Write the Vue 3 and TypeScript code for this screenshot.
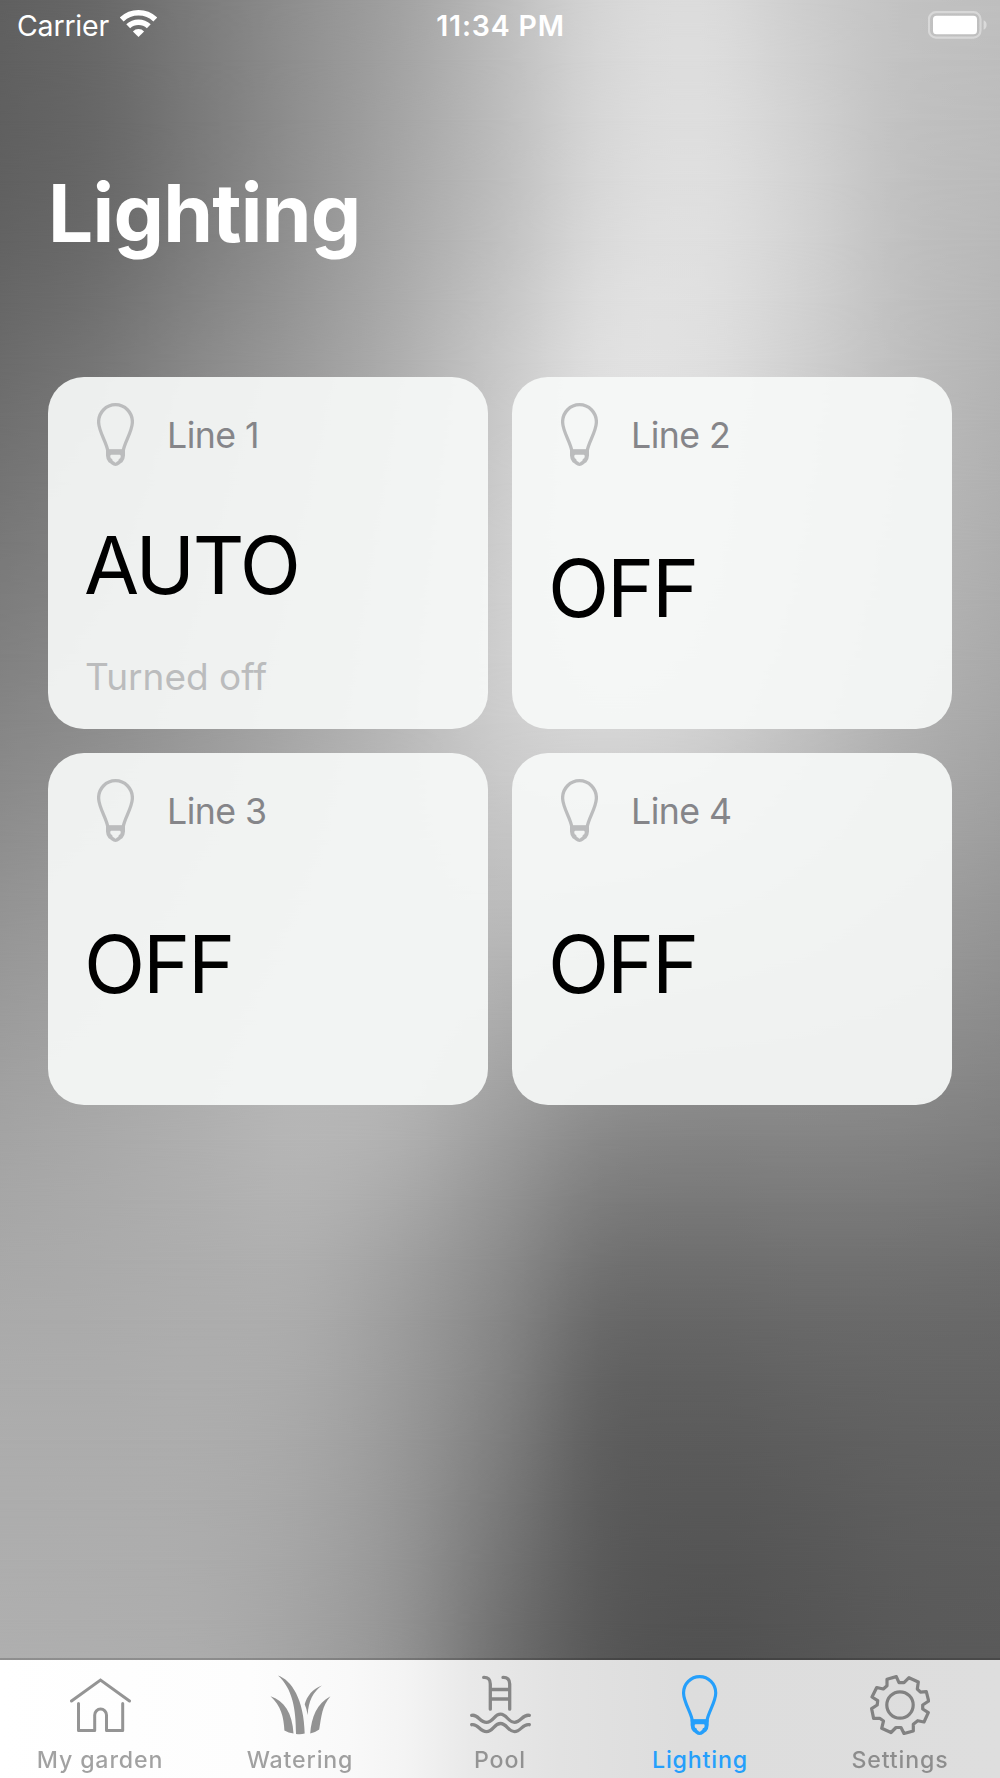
<script setup lang="ts">
interface Line {
  name: string
  mode: string
  note?: string
}

type TabIcon = 'home' | 'grass' | 'pool' | 'bulb' | 'gear'

interface Tab {
  label: string
  icon: TabIcon
  active?: boolean
}

interface MeshRow {
  y: number
  greys: number[]
}

const lines: Line[] = [
  { name: 'Line 1', mode: 'AUTO', note: 'Turned off' },
  { name: 'Line 2', mode: 'OFF' },
  { name: 'Line 3', mode: 'OFF' },
  { name: 'Line 4', mode: 'OFF' },
]

const tabs: Tab[] = [
  { label: 'My garden', icon: 'home' },
  { label: 'Watering', icon: 'grass' },
  { label: 'Pool', icon: 'pool' },
  { label: 'Lighting', icon: 'bulb', active: true },
  { label: 'Settings', icon: 'gear' },
]

// Backdrop mesh: grey levels across the width at a series of heights.
const columns = [0, 100, 200, 300, 400, 500, 600, 700, 800, 900, 1000]
const mesh: MeshRow[] = [
  { y: 0, greys: [96, 105, 124, 144, 162, 188, 213, 220, 206, 195, 191] },
  { y: 200, greys: [97, 105, 124, 145, 167, 190, 216, 223, 211, 193, 186] },
  { y: 370, greys: [108, 119, 138, 155, 175, 200, 223, 223, 208, 191, 180] },
  { y: 740, greys: [135, 143, 155, 169, 185, 204, 212, 207, 192, 176, 165] },
  { y: 1110, greys: [162, 168, 175, 182, 178, 160, 142, 137, 137, 135, 130] },
  { y: 1280, greys: [169, 171, 173, 173, 159, 138, 112, 108, 110, 110, 108] },
  { y: 1390, greys: [172, 172, 173, 169, 154, 130, 99, 95, 98, 100, 100] },
  { y: 1500, greys: [173, 173, 172, 166, 150, 122, 93, 88, 90, 94, 95] },
  { y: 1660, greys: [175, 174, 172, 163, 146, 112, 88, 81, 84, 88, 89] },
]

// Cubic Hermite interpolation through (xs, vs) with finite-difference slopes.
function smooth(xs: number[], vs: number[], x: number): number {
  const last = xs.length - 1
  if (x >= xs[last]) return vs[last]
  let i = 0
  while (x > xs[i + 1]) i++
  const slope = (k: number): number => {
    const a = Math.max(k - 1, 0)
    const b = Math.min(k + 1, last)
    return (vs[b] - vs[a]) / (xs[b] - xs[a])
  }
  const h = xs[i + 1] - xs[i]
  const t = (x - xs[i]) / h
  const t2 = t * t
  const t3 = t2 * t
  return (2 * t3 - 3 * t2 + 1) * vs[i] + (t3 - 2 * t2 + t) * h * slope(i)
    + (3 * t2 - 2 * t3) * vs[i + 1] + (t3 - t2) * h * slope(i + 1)
}

const rowStep = 60
const colStep = 25
const heights = mesh.map((row) => row.y)

const layers = Array.from({ length: 29 }, (_, i) => {
  const y = i * rowStep
  const greys = columns.map((_c, k) => smooth(heights, mesh.map((row) => row.greys[k]), y))
  const colours = Array.from({ length: 1000 / colStep + 1 }, (_s, n) => {
    const g = smooth(columns, greys, n * colStep).toFixed(1)
    return `rgb(${g} ${g} ${g}) ${n * colStep}px`
  }).join(', ')
  return {
    backgroundImage: `linear-gradient(90deg, ${colours})`,
    maskImage: i === 0 ? 'none' : `linear-gradient(180deg, transparent ${y - rowStep}px, #000 ${y}px)`,
  }
})
</script>

<template>
  <div class="screen">
    <div class="backdrop">
      <div v-for="(layer, i) in layers" :key="i" class="layer" :style="layer"></div>
    </div>

    <header class="status">
      <div class="status-side">
        <span class="carrier">Carrier</span>
        <svg class="wifi" width="37" height="27" viewBox="0 0 37 27" fill="none" stroke="#fff" stroke-width="5.6">
          <path d="M1.7 9.6A24.2 24.2 0 0 1 35.3 9.6" />
          <path d="M8.2 16.3A15 15 0 0 1 28.8 16.3" />
          <path d="M18.5 27 12.9 21.4A8 8 0 0 1 24.1 21.4Z" fill="#fff" stroke="none" />
        </svg>
      </div>
      <span class="time">11:34 PM</span>
      <div class="status-side end">
        <svg class="battery" width="59" height="28" viewBox="0 0 59 28">
          <rect x="1" y="1.2" width="51.5" height="25.4" rx="7" fill="none" stroke="#fff" stroke-opacity=".38" stroke-width="2.2" />
          <rect x="5" y="4.7" width="44" height="18.6" rx="3.6" fill="#fff" />
          <path d="M55.6 9.3Q58.6 10.6 58.6 14T55.6 18.7Z" fill="#fff" fill-opacity=".42" />
        </svg>
      </div>
    </header>

    <main class="content">
      <h1 class="title">Lighting</h1>
      <section class="grid">
        <article v-for="line in lines" :key="line.name" class="card">
          <div class="card-head">
            <svg class="bulb" width="37" height="63" viewBox="0 0 37 63">
              <path d="M10.8 48C9.8 39.5 1.6 28.6 1.6 18.9A16.9 17.2 0 0 1 35.4 18.9C35.4 28.6 27.2 39.5 26.2 48Z" fill="none" stroke="currentColor" stroke-width="3.3" />
              <path fill-rule="evenodd" d="M9 46.7H28V52.5Q27.8 57 25.4 59.2Q23.5 60.3 22.6 61.3Q20.5 62.9 18.5 62.9T14.4 61.3Q13.5 60.3 11.6 59.2Q9.2 57 9 52.5ZM14.2 51.7Q12.9 52 13.3 53.7Q13.4 55.6 15.1 56Q15.6 58.5 17 58.5Q18.5 60.8 20 58.5Q21.4 58.5 21.9 56Q23.6 55.6 23.7 53.7Q24.1 52 22.8 51.7Z" fill="currentColor" />
            </svg>
            <span class="name">{{ line.name }}</span>
          </div>
          <div class="mode">{{ line.mode }}</div>
          <div v-if="line.note" class="note">{{ line.note }}</div>
        </article>
      </section>
    </main>

    <nav class="tabs">
      <div v-for="tab in tabs" :key="tab.label" class="tab" :class="{ active: tab.active }">
        <svg v-if="tab.icon === 'home'" class="icon" width="61" height="60" viewBox="0 0 61 60" fill="none" stroke="currentColor" stroke-width="3" stroke-linecap="round" stroke-linejoin="round">
          <path d="M1.5 26 30.5 5 59.5 26" stroke-linejoin="miter" />
          <path d="M8.5 28.5V55.5H24.7V40A5.9 5.9 0 0 1 36.5 40V55.5H52.7V28.5" />
        </svg>
        <svg v-else-if="tab.icon === 'grass'" class="icon" width="61" height="60" viewBox="0 0 61 60" fill="currentColor">
          <path d="M8 .4C21.5 5 34 24 34.7 58.6Q30.5 59.8 26 58.9C26 34 22.5 13.5 8 .4Z" />
          <path d="M.5 21.2C14 25.5 22.5 38 23.5 58.4Q18.5 58 14.4 55.6C13.8 42 11 31 .5 21.2Z" />
          <path d="M51.9 10.5C43 17 38.4 26 37.7 40Q36.7 34 34.7 29.3C37 21 42.5 14 51.9 10.5Z" />
          <path d="M60.5 21.2C52 31 51.5 41 49.2 54.5Q45.5 57.4 40.2 58.5C41.5 42 47 28 60.5 21.2Z" />
        </svg>
        <svg v-else-if="tab.icon === 'pool'" class="icon" width="61" height="60" viewBox="0 0 61 60" fill="none" stroke="currentColor" stroke-width="3.3" stroke-linecap="round">
          <path d="M13.7 2.4Q20.3 2.2 20.3 9V34.2M33 2.4Q39.7 2.2 39.7 9V34.2M20.3 14.5H39.7M20.3 24H39.7" />
          <path d="M1.7 40.4C8 38.8 9.5 47.3 16.5 47.3S24 39.2 30.5 39.2 38 47.3 44.5 47.3 53 38.8 59.3 40.4" />
          <path d="M1.7 49.7C8 48.1 9.5 56.6 16.5 56.6S24 48.5 30.5 48.5 38 56.6 44.5 56.6 53 48.1 59.3 49.7" />
        </svg>
        <svg v-else-if="tab.icon === 'bulb'" class="icon" width="35.3" height="60" viewBox="0 0 37 63">
          <path d="M10.8 48C9.8 39.5 1.6 28.6 1.6 18.9A16.9 17.2 0 0 1 35.4 18.9C35.4 28.6 27.2 39.5 26.2 48Z" fill="none" stroke="currentColor" stroke-width="3.3" />
          <path fill-rule="evenodd" d="M9 46.7H28V52.5Q27.8 57 25.4 59.2Q23.5 60.3 22.6 61.3Q20.5 62.9 18.5 62.9T14.4 61.3Q13.5 60.3 11.6 59.2Q9.2 57 9 52.5ZM14.2 51.7Q12.9 52 13.3 53.7Q13.4 55.6 15.1 56Q15.6 58.5 17 58.5Q18.5 60.8 20 58.5Q21.4 58.5 21.9 56Q23.6 55.6 23.7 53.7Q24.1 52 22.8 51.7Z" fill="currentColor" />
        </svg>
        <svg v-else class="icon" width="60" height="60" viewBox="0 0 60 60" fill="none" stroke="currentColor" stroke-width="3.2" stroke-linejoin="round">
          <path d="M17 4.3 26.3 1.6 29 7.7H34L39 2.7 48.3 7 47.3 14 50.5 17.2 56.3 16.7 58.7 26 52.7 30V34L58.3 37.7 54 47 47.7 45.7 43.3 49.2V56L34 58.5 31 52.5H26L21 57.5 11.7 53.3 13.5 46 9.7 43.3H3.6L1.6 33.7 7.2 30 7.7 25.7 2 22 6.7 12.5 13.3 14 17 10.7Z" />
          <circle cx="30" cy="30" r="13.2" />
        </svg>
        <span class="label">{{ tab.label }}</span>
      </div>
    </nav>
  </div>
</template>

<style>
body {
  margin: 0;
}
</style>

<style scoped>
.screen {
  position: relative;
  display: flex;
  flex-direction: column;
  width: 1000px;
  height: 1778px;
  overflow: hidden;
  font-family: Inter, "Liberation Sans", sans-serif;
}

.backdrop,
.layer {
  position: absolute;
  inset: 0;
}

.status {
  position: relative;
  display: flex;
  align-items: center;
  height: 51px;
  padding: 0 13px 0 17px;
  color: #fff;
}

.status-side {
  display: flex;
  flex: 1;
  align-items: center;
}

.status-side.end {
  justify-content: flex-end;
}

.carrier {
  font-size: 28.5px;
  letter-spacing: -0.2px;
}

.wifi {
  margin: -4px 0 0 11px;
}

.battery {
  margin-top: -2px;
}

.time {
  margin-right: 3px;
  font-size: 28.5px;
  font-weight: 600;
  letter-spacing: 0.8px;
}

.content {
  position: relative;
  flex: 1;
  padding: 116px 48px 0;
}

.title {
  margin: 0 0 114px;
  height: 96px;
  color: #fff;
  font-size: 80px;
  line-height: 91px;
  font-weight: 700;
  letter-spacing: -0.75px;
}

.grid {
  display: grid;
  grid-template-columns: 440px 440px;
  grid-auto-rows: 352px;
  gap: 24px;
}

.card {
  display: flex;
  flex-direction: column;
  box-sizing: border-box;
  padding: 26px 36px 29px;
  border-radius: 36px;
  background: rgba(246, 249, 248, 0.93);
}

.card-head {
  display: flex;
  align-items: center;
  height: 63px;
  padding-left: 13px;
  color: #bbbcbd;
}

.name {
  margin-left: 33px;
  color: #858589;
  font-size: 35.7px;
  letter-spacing: -0.55px;
}

.mode {
  display: flex;
  flex: 1;
  align-items: center;
  padding-top: 9px;
  color: #000;
  font-size: 80px;
  line-height: 96px;
  letter-spacing: -2.2px;
}

.note {
  height: 46px;
  padding-left: 1px;
  color: #bbbcbd;
  font-size: 37px;
  line-height: 46px;
}

.tabs {
  position: relative;
  display: flex;
  box-sizing: border-box;
  height: 120px;
  border-top: 2px solid rgba(0, 0, 0, 0.18);
  background: linear-gradient(90deg, #fff 0, #fdfdfd 250px, #f9f9f9 350px, #f4f4f4 405px, #e9e9e9 470px, #e2e2e2 560px, #dddddd 680px, #dedede 1000px);
  background-clip: padding-box;
}

.tab {
  display: flex;
  flex: 1;
  flex-direction: column;
  align-items: center;
  padding-top: 15px;
  color: #000;
}

.icon {
  opacity: 0.41;
}

.label {
  margin-top: 11px;
  font-size: 23.2px;
  line-height: 28px;
  font-weight: 500;
  letter-spacing: 0.85px;
  opacity: 0.36;
}

.tab.active {
  color: #259ffb;
}

.active .icon,
.active .label {
  opacity: 1;
}
</style>
